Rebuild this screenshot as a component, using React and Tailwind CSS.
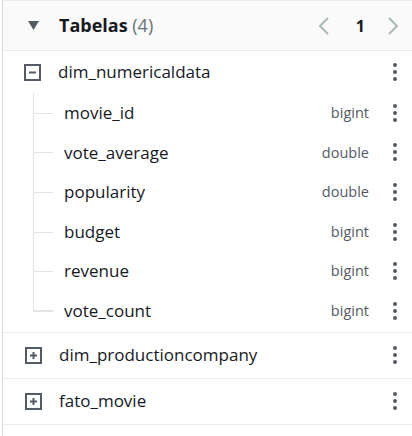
import React from "react";

const font = { fontFamily: '"Open Sans", "Noto Sans", Arial, sans-serif' };

function Dots() {
  return (
    <div className="flex w-[14px] flex-col items-center gap-[3px]">
      <span className="block h-[4px] w-[4px] rounded-full bg-[#545b64]" />
      <span className="block h-[4px] w-[4px] rounded-full bg-[#545b64]" />
      <span className="block h-[4px] w-[4px] rounded-full bg-[#545b64]" />
    </div>
  );
}

function BoxIcon({ plus }) {
  return (
    <svg width="17" height="17" viewBox="0 0 17 17" className="shrink-0">
      <rect x="1" y="1" width="15" height="15" fill="none" stroke="#545b64" strokeWidth="2" />
      <rect x="5" y="7.5" width="7" height="2" fill="#545b64" />
      {plus && <rect x="7.5" y="5" width="2" height="7" fill="#545b64" />}
    </svg>
  );
}

const cols = [
  ["movie_id", "bigint"],
  ["vote_average", "double"],
  ["popularity", "double"],
  ["budget", "bigint"],
  ["revenue", "bigint"],
  ["vote_count", "bigint"],
];

export default function App() {
  return (
    <div className="h-[436px] w-[412px] overflow-hidden bg-white" style={font}>
      <div className="ml-[2px] h-full border-l border-[#d5dbdb]">
        <div className="flex h-[51px] items-center border-b border-t border-[#eaeded] bg-[#fafafa] pr-[12px]">
          <svg width="11" height="9" viewBox="0 0 11 9" className="ml-[25px]">
            <path d="M0 0 H11 L5.5 9 Z" fill="#545b64" />
          </svg>
          <div className="ml-[20px] text-[18px] font-bold text-[#16191f]">
            Tabelas <span className="font-normal text-[#687078]">(4)</span>
          </div>
          <div className="ml-auto flex items-center">
            <svg width="14" height="20" viewBox="0 0 14 20">
              <path d="M11 2 L3 10 L11 18" fill="none" stroke="#aab7b8" strokeWidth="2" />
            </svg>
            <span className="ml-[25px] mr-[21px] text-[16px] font-bold text-[#16191f]">1</span>
            <svg width="14" height="20" viewBox="0 0 14 20">
              <path d="M3 2 L11 10 L3 18" fill="none" stroke="#aab7b8" strokeWidth="2" />
            </svg>
          </div>
        </div>

        <div className="border-b border-[#eaeded] pb-[1px]">
          <div className="flex h-[42px] items-center pl-[21px] pr-[10px]">
            <BoxIcon />
            <span className="ml-[17px] text-[17px] text-[#16191f]">dim_numericaldata</span>
            <div className="ml-auto"><Dots /></div>
          </div>
          <div className="relative">
            {cols.map(([name, type], i) => (
              <div key={name} className="relative flex h-[39.6px] items-center pl-[61px] pr-[10px]">
                <div
                  className={
                    "absolute left-[30px] top-0 w-[20px] border-l border-[#e1e4e6] " +
                    (i === cols.length - 1 ? "h-1/2 border-b" : "h-full")
                  }
                />
                <div className="absolute left-[30px] top-1/2 h-px w-[20px] bg-[#e1e4e6]" />
                <span className="text-[17px] text-[#16191f]">{name}</span>
                <span className="ml-auto mr-[19px] text-[14.5px] text-[#545b64]">{type}</span>
                <Dots />
              </div>
            ))}
          </div>
        </div>

        {["dim_productioncompany", "fato_movie"].map((t) => (
          <div key={t} className="flex h-[46px] items-center border-b border-[#eaeded] pl-[22px] pr-[10px]">
            <BoxIcon plus />
            <span className="ml-[17px] text-[17px] text-[#16191f]">{t}</span>
            <div className="ml-auto"><Dots /></div>
          </div>
        ))}
      </div>
    </div>
  );
}
